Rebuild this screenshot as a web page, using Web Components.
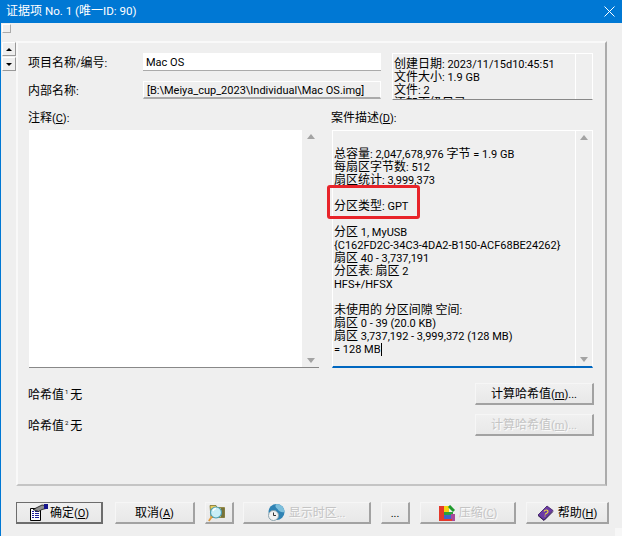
<!DOCTYPE html>
<html>
<head>
<meta charset="utf-8">
<style>
  html, body { margin: 0; padding: 0; height: 100%; background: #efefef; overflow: hidden; }
  body { font: 11px/13px Roboto, "Noto Sans CJK SC", sans-serif; color: #000; }
  .cjk { display: inline-block; height: 13px; margin: -2px 0; font: 12px/13px "Noto Sans CJK SC", sans-serif; }
  .caret { display: inline-block; width: 1px; height: 13px; background: #000; vertical-align: -3px; }
  sup { font-size: 6px; line-height: 0; vertical-align: 5px; margin: 0 -1px 0 1px; }
</style>
</head>
<body>
<template id="t-button">
  <style>
    :host { display: inline-flex; box-sizing: border-box; height: 22px; align-items: center; justify-content: center; gap: 4px;
      background: linear-gradient(#f0f0f0, #e8e8e8); border-top: 1px solid #f6f6f6; border-left: 1px solid #f6f6f6;
      border-right: 2px solid #a2a2a2; border-bottom: 2px solid #a2a2a2; color: #000; white-space: nowrap; }
    :host([disabled]) { color: #c4c4c4; text-shadow: 1px 1px 0 #fbfbfb; }
    :host([default]) { border: 1px solid #6d6d6d; border-right-width: 2px; border-bottom-width: 2px; }
    ::slotted(svg) { flex: none; }
    span { padding-top: 2px; }
  </style>
  <slot name="icon"></slot><span><slot></slot></span>
</template>
<template id="t-scrollbox">
  <style>
    :host { display: flex; box-sizing: border-box; min-height: 0; overflow: hidden; background: #efefef; border-top: 1px solid #fff; border-right: 1px solid #fff; border-left: 1px solid #fff; }
    :host([white]) { background: #fff; border: 0; border-bottom: 1px solid #888; }
    :host([accent]) { border-bottom: 2px solid #0067c0; }
    :host([compact]) { height: 47px; border-bottom: 1px solid #888; }
    .text { flex: 1; padding: 17px 1px 0; white-space: pre; line-height: 13px; overflow: hidden; }
    :host([compact]) .text { padding-top: 4px; }
    .bar { flex: none; width: 17px; background: #efefef; border-left: 1px solid #fff; display: flex; flex-direction: column; justify-content: space-between; align-items: center; padding: 4px 0; box-sizing: border-box; }
    :host([white]) .bar { border-left: 0; }
    :host([compact]) .bar > span { visibility: hidden; }
    .up, .down { width: 0; height: 0; border-left: 4px solid transparent; border-right: 4px solid transparent; }
    .up { border-bottom: 5px solid #a3a3a3; }
    .down { border-top: 5px solid #a3a3a3; }
  </style>
  <div class="text"><slot></slot></div>
  <div class="bar"><span class="up"></span><span class="down"></span></div>
</template>
<template id="t-field">
  <style>
    :host { display: flex; box-sizing: border-box; height: 18px; align-items: center; padding: 0 3px; white-space: pre; overflow: hidden; background: #efefef; border-top: 1px solid #fff; border-left: 1px solid #fff; border-right: 1px solid #fff; border-bottom: 2px solid #aaa; }
    :host([white]) { background: #fff; border: 0; border-bottom: 1px solid #aaa; }
    span { padding-top: 2px; }
  </style>
  <span><slot></slot></span>
</template>
<template id="t-titlebar">
  <style>
    :host { display: flex; height: 23px; margin-left: -1px; background: #0078d4; color: #fff; align-items: center; justify-content: space-between; padding: 0 7px 0 6px; font-size: 11.6px; }
    svg { display: block; }
  </style>
  <span><slot></slot></span>
  <svg width="11" height="11" viewBox="0 0 11 11"><path d="M.5 .5L10.500 10.500M10.500 .5L.5 10.500" stroke="#fff" stroke-width="1" fill="none"/></svg>
</template>
<template id="t-spinner">
  <style>
    :host { display: flex; flex-direction: column; gap: 1px; width: 14px; margin-left: 1px; }
    span { display: flex; height: 14px; align-items: center; justify-content: center; background: #efefef; border-top: 1px solid #fff; border-left: 1px solid #fff; border-right: 1px solid #999; border-bottom: 1px solid #999; box-sizing: border-box; }
    i { width: 0; height: 0; border-left: 3px solid transparent; border-right: 3px solid transparent; }
    .u { border-bottom: 3px solid #000; }
    .d { border-top: 3px solid #000; }
  </style>
  <span><i class="u"></i></span><span><i class="d"></i></span>
</template>
<template id="t-dialog">
  <style>
    :host { display: flex; flex-direction: column; height: 536px; box-sizing: border-box; border-left: 1px solid #0078d4; position: relative; }
    .tab { height: 18px; padding: 1px 0 0 1px; box-sizing: border-box; }
    .tab i { display: block; width: 9px; height: 9px; background: #efefef; border-top: 1px solid #fff; border-left: 1px solid #fff; border-right: 1px solid #aaa; border-bottom: 1px solid #aaa; box-sizing: border-box; }
    .mid { display: flex; height: 445px; }
    .spin { width: 15px; padding-top: 1px; }
    .panel { flex: none; width: 591px; box-sizing: border-box; border-top: 2px solid #f9f9f9; border-left: 2px solid #f9f9f9; border-right: 2px solid #ababab; border-bottom: 2px solid #c4c4c4; }
    .foot { display: flex; padding: 16px 0 0 15px; }
    .grip { position: absolute; right: 0; bottom: 0; width: 7px; height: 8px; background: #f7f7f7; }
  </style>
  <slot name="title"></slot>
  <div class="tab"><i></i></div>
  <div class="mid">
    <div class="spin"><slot name="spin"></slot></div>
    <div class="panel"><slot></slot></div>
  </div>
  <div class="foot"><slot name="foot"></slot></div>
  <div class="grip"></div>
</template>
<template id="t-form">
  <style>
    :host { display: grid; grid-template-columns: 115px 238px 11px 201px; grid-template-rows: 18px 10px 18px; padding: 10px 0 0 10px; }
    .lbl { display: flex; align-items: center; padding-top: 2px; }
    .info { grid-column: 4; grid-row: 1 / 4; }
    .a { grid-column: 1; grid-row: 1; } .b { grid-column: 2; grid-row: 1; }
    .c { grid-column: 1; grid-row: 3; } .d { grid-column: 2; grid-row: 3; }
  </style>
  <div class="lbl a"><span><slot name="l1"></slot></span></div>
  <div class="b"><slot name="f1"></slot></div>
  <div class="lbl c"><span><slot name="l2"></slot></span></div>
  <div class="d"><slot name="f2"></slot></div>
  <div class="info"><slot name="info"></slot></div>
</template>
<template id="t-notes">
  <style>
    :host { display: grid; grid-template-columns: 290px 261px; column-gap: 13px; grid-template-rows: 13px 238px; row-gap: 6px; padding: 12px 0 0 11px; position: relative; }
    .mark { position: absolute; left: 309px; top: 86px; width: 87px; height: 28px; border: 3px solid #e8242a; border-radius: 3px; }
    ::slotted([slot=ll]), ::slotted([slot=rl]) { margin: 1px 0 -1px -1px; }
  </style>
  <slot name="ll"></slot><slot name="rl"></slot>
  <slot name="lb"></slot><slot name="rb"></slot>
  <div class="mark"></div>
</template>
<template id="t-hash">
  <style>
    :host { display: grid; grid-template-columns: 447px 119px; grid-template-rows: 22px 22px; row-gap: 9px; padding: 15px 0 0 10px; align-items: center; }
    ::slotted(span) { padding-top: 2px; }
  </style>
  <slot name="a"></slot><slot name="ba"></slot>
  <slot name="b"></slot><slot name="bb"></slot>
</template>
<template id="t-footer">
  <style>
    :host { display: flex; }
  </style>
  <slot></slot>
</template>

<script>
  function simple(name, tpl) {
    customElements.define(name, class extends HTMLElement {
      constructor() {
        super();
        const shadow = this.attachShadow({ mode: "open" });
        shadow.appendChild(document.getElementById(tpl).content.cloneNode(true));
      }
    });
  }
  simple("ev-button", "t-button");
  simple("ev-scrollbox", "t-scrollbox");
  simple("ev-field", "t-field");
  simple("ev-titlebar", "t-titlebar");
  simple("ev-spinner", "t-spinner");
  simple("ev-dialog", "t-dialog");
  simple("ev-form", "t-form");
  simple("ev-notes", "t-notes");
  simple("ev-hash", "t-hash");
  simple("ev-footer", "t-footer");
</script>

<ev-dialog>
  <ev-titlebar slot="title">证据项 No. 1 (唯一ID: 90)</ev-titlebar>
  <ev-spinner slot="spin"></ev-spinner>

  <ev-form>
    <span slot="l1">项目名称/编号:</span>
    <ev-field slot="f1" white>Mac OS</ev-field>
    <span slot="l2">内部名称:</span>
    <ev-field slot="f2">[B:\Meiya_cup_2023\Individual\Mac OS.img]</ev-field>
    <ev-scrollbox slot="info" compact>创建日期: 2023/11/15d10:45:51
文件大小: 1.9 GB
文件: 2
添加下级目录: 0</ev-scrollbox>
  </ev-form>

  <ev-notes>
    <span slot="ll">注释(<u>C</u>):</span>
    <span slot="rl">案件描述(<u>D</u>):</span>
    <ev-scrollbox slot="lb" white></ev-scrollbox>
    <ev-scrollbox slot="rb" accent>总容量: 2,047,678,976 字节 = 1.9 GB
每扇区字节数: 512
扇区统计: 3,999,373

分区类型: GPT

分区 1, MyUSB
{C162FD2C-34C3-4DA2-B150-ACF68BE24262}
扇区 40 - 3,737,191
分区表: 扇区 2
HFS+/HFSX

未使用的 分区间隙 空间:
扇区 0 - 39 (20.0 KB)
扇区 3,737,192 - 3,999,372 (128 MB)
= 128 MB<i class="caret"></i></ev-scrollbox>
  </ev-notes>

  <ev-hash>
    <span slot="a">哈希值<sup>1</sup> 无</span>
    <ev-button slot="ba">计算哈希值(<u>m</u>)...</ev-button>
    <span slot="b">哈希值<sup>2</sup> 无</span>
    <ev-button slot="bb" disabled>计算哈希值(<u>m</u>)...</ev-button>
  </ev-hash>

  <ev-footer slot="foot">
    <ev-button default style="width:87px;margin-right:12px">
      <svg slot="icon" width="19" height="17" viewBox="0 0 19 17" style="margin-right:-2px"><path d="M1.500 4.500h10v12h-10z" fill="#fff" stroke="#000"/><path d="M3 7.500h2M6 7.500h4M3 9.500h2M6 9.500h4M3 11.500h2M6 11.500h4M3 13.500h2M6 13.500h4" stroke="#20209a"/><path d="M4 5.500L13 1l4 .5v3l-4 1-3.500 2z" fill="#8f8f8f" stroke="#111" stroke-width=".8"/><path d="M15 0h4v5h-4z" fill="#14148a"/></svg>
      确定(<u>O</u>)
    </ev-button>
    <ev-button style="width:80px;margin-right:10px">取消(<u>A</u>)</ev-button>
    <ev-button style="width:29px;margin-right:9px">
      <svg slot="icon" width="18" height="18" viewBox="0 0 18 18"><path d="M2 1.500h6l1 2h7.500v10H3z" fill="#eccd5c" stroke="#7c7330" stroke-width=".8"/><path d="M13 4h3.500v9.500H13z" fill="#77723a"/><circle cx="8" cy="8.500" r="5.500" fill="#c8eef7" stroke="#4e9fb4" stroke-width="1.200"/><path d="M5 7a3.500 3.500 0 0 1 3-2.500" stroke="#fff" stroke-width="1.500" fill="none"/><path d="M4 12.500L.8 17" stroke="#e39a3a" stroke-width="1.800"/></svg>
    </ev-button>
    <ev-button disabled style="width:128px;margin-right:10px">
      <svg slot="icon" width="17" height="17" viewBox="0 0 17 17"><circle cx="8.500" cy="8" r="8" fill="#2f83b4"/><path d="M8.500 0a8 8 0 0 1 8 8c-3 1-6-1-7-3-2-2-3-3-1-5z" fill="#7dbfdc"/><circle cx="5.500" cy="11.500" r="5" fill="#f2f2f2" stroke="#8fa5ae"/><path d="M5.500 8.500v3h2.500" stroke="#333" fill="none"/></svg>
      显示时区...
    </ev-button>
    <ev-button style="width:29px;margin-right:10px">...</ev-button>
    <ev-button disabled style="width:96px;margin-right:10px">
      <svg slot="icon" width="17" height="16" viewBox="0 0 17 16"><path d="M1 1h5v15H1z" fill="#e5382a"/><path d="M6 14h8v2H6z" fill="#e5382a"/><path d="M6 1h5v6H6z" fill="#f6d40f"/><path d="M6 7h9v3H6z" fill="#2ca13a"/><path d="M6 10h10v4H6z" fill="#3f62cc"/><path d="M13 9h4v7h-3v-2h-1z" fill="#a9489a"/><path d="M11 1l5 5" stroke="#1f9a2c" stroke-width="3"/></svg>
      压缩(<u>C</u>)
    </ev-button>
    <ev-button style="width:83px">
      <svg slot="icon" width="17" height="16" viewBox="0 0 17 16"><path d="M1 10L10 1l6 4.500L7 15z" fill="#6b3aa6" stroke="#3a1d60" stroke-width=".8"/><path d="M1 10.500L7 15.500l9-9" fill="none" stroke="#2f1650" stroke-width="1"/><path d="M7 6.500c1-2 4-2 4 0s-2 1.500-3 3M7.500 11h1" stroke="#f2e23a" fill="none" stroke-width="1.100"/></svg>
      帮助(<u>H</u>)
    </ev-button>
  </ev-footer>
</ev-dialog>

<script>
  // wrap CJK runs so they stay 12px next to the narrower latin text
  const walker = document.createTreeWalker(document.querySelector("ev-dialog"), NodeFilter.SHOW_TEXT);
  const nodes = [];
  while (walker.nextNode()) nodes.push(walker.currentNode);
  for (const node of nodes) {
    if (!/[\u4e00-\u9fff]/.test(node.data)) continue;
    const frag = document.createDocumentFragment();
    for (const part of node.data.split(/([\u4e00-\u9fff]+)/)) {
      if (!part) continue;
      if (/[\u4e00-\u9fff]/.test(part)) {
        const span = document.createElement("span");
        span.className = "cjk";
        span.textContent = part;
        frag.appendChild(span);
      } else {
        frag.appendChild(document.createTextNode(part));
      }
    }
    node.replaceWith(frag);
  }
</script>
</body>
</html>
